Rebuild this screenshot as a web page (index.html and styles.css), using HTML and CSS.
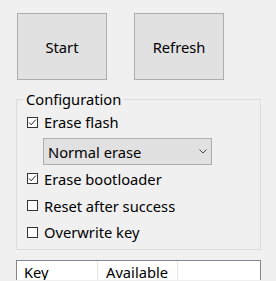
FILE: index.html
```html
<!DOCTYPE html>
<html lang="en">
<head>
  <meta charset="UTF-8">
  <title>Programmer</title>
  <link rel="stylesheet" href="styles.css">
</head>
<body>
  <div class="actions">
    <button class="big-btn">Start</button>
    <button class="big-btn">Refresh</button>
  </div>

  <fieldset class="group">
    <legend>Configuration</legend>
    <div class="row first">
      <span class="check on"><svg width="11" height="11" viewBox="0 0 11 11"><polyline points="2,5.5 4.2,7.8 8.8,2.6" fill="none" stroke="#222" stroke-width="1"/></svg></span>
      <span>Erase flash</span>
    </div>
    <div class="select">
      <span>Normal erase</span>
      <svg width="8" height="5" viewBox="0 0 8 5"><polyline points="0.5,0.5 4,4 7.5,0.5" fill="none" stroke="#444" stroke-width="1"/></svg>
    </div>
    <div class="row">
      <span class="check on"><svg width="11" height="11" viewBox="0 0 11 11"><polyline points="2,5.5 4.2,7.8 8.8,2.6" fill="none" stroke="#222" stroke-width="1"/></svg></span>
      <span>Erase bootloader</span>
    </div>
    <div class="row">
      <span class="check"></span>
      <span>Reset after success</span>
    </div>
    <div class="row last">
      <span class="check"></span>
      <span>Overwrite key</span>
    </div>
  </fieldset>

  <div class="list">
    <div class="list-head">
      <div class="col col-key">Key</div>
      <div class="col col-avail">Available</div>
    </div>
  </div>
</body>
</html>
```

FILE: styles.css
```css
html, body {
  overflow: hidden;
}
body {
  margin: 0;
  background: #f0f0f0;
  font-family: "Noto Sans", "Open Sans", sans-serif;
  font-size: 14.7px;
  color: #000;
  height: 281px;
}
.actions {
  display: flex;
  gap: 27px;
  padding: 13px 0 0 17px;
}
.big-btn {
  width: 90px;
  height: 67px;
  padding: 0;
  background: #e1e1e1;
  border: 1px solid #adadad;
  font-family: inherit;
  font-size: 14.7px;
  color: #000;
}
.group {
  box-sizing: border-box;
  width: 245px;
  margin: 9px 0 0 16px;
  padding: 0 0 4px 6px;
  border: 1px solid #dcdcdc;
}
.group legend {
  padding: 0 3px;
  line-height: 20px;
}
.row {
  display: flex;
  align-items: center;
  gap: 6px;
  height: 27px;
  margin-left: 4px;
}
.row.first, .row.last {
  height: 26px;
}
.check {
  box-sizing: border-box;
  width: 11px;
  height: 11px;
  border: 1px solid #333;
  background: #fff;
  position: relative;
}
.check svg {
  position: absolute;
  left: -1px;
  top: -1px;
}
.select {
  box-sizing: border-box;
  display: flex;
  align-items: center;
  justify-content: space-between;
  width: 169px;
  height: 27px;
  margin: 3px 0 0 20px;
  padding: 0 4px 0 4px;
  background: #e1e1e1;
  border: 1px solid #adadad;
}
.list {
  box-sizing: border-box;
  width: 245px;
  height: 20px;
  margin: 10px 0 0 16px;
  background: #fff;
  border: 1px solid #828790;
  border-bottom: none;
  overflow: hidden;
}
.list-head {
  display: flex;
  height: 25px;
}
.col {
  box-sizing: border-box;
  padding-top: 1px;
  border-right: 1px solid #e5e5e5;
  line-height: 20px;
}
.col-key {
  width: 81px;
  padding-left: 7px;
}
.col-avail {
  width: 80px;
  padding-left: 8px;
}
```
